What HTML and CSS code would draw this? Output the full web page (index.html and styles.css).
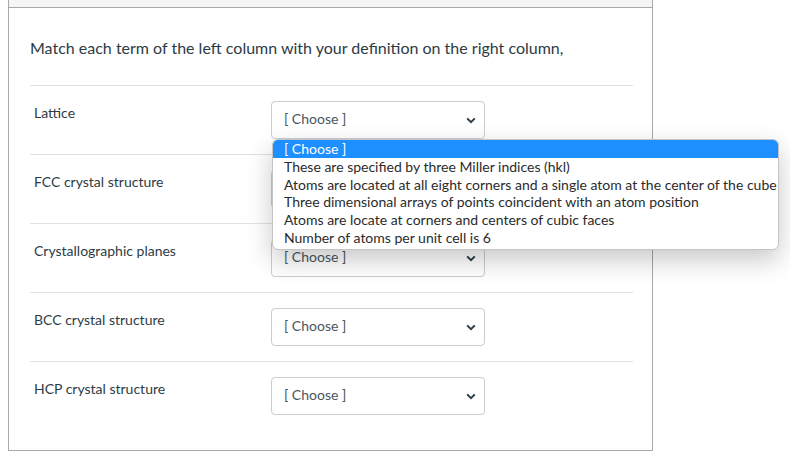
FILE: index.html
```html
<!DOCTYPE html>
<html>
<head>
<meta charset="utf-8">
<link rel="stylesheet" href="styles.css">
</head>
<body>
<div class="quiz">
  <div class="head"></div>
  <div class="content">
    <p class="prompt">Match each term of the left column with your definition on the right column,</p>
    <div class="row">
      <div class="label">Lattice</div>
      <div class="field">
        <div class="select"><span>[ Choose ]</span><svg class="chev" width="10" height="7" viewBox="0 0 10 7"><path d="M1.2 1.4 L5 5.2 L8.8 1.4" fill="none" stroke="#2d3b45" stroke-width="2"/></svg></div>
        <ul class="menu">
          <li class="sel">[ Choose ]</li>
          <li>These are specified by three Miller indices (hkl)</li>
          <li>Atoms are located at all eight corners and a single atom at the center of the cube</li>
          <li>Three dimensional arrays of points coincident with an atom position</li>
          <li>Atoms are locate at corners and centers of cubic faces</li>
          <li>Number of atoms per unit cell is 6</li>
        </ul>
      </div>
    </div>
    <div class="row">
      <div class="label">FCC crystal structure</div>
      <div class="field">
        <div class="select"><span>[ Choose ]</span><svg class="chev" width="10" height="7" viewBox="0 0 10 7"><path d="M1.2 1.4 L5 5.2 L8.8 1.4" fill="none" stroke="#2d3b45" stroke-width="2"/></svg></div>
      </div>
    </div>
    <div class="row">
      <div class="label">Crystallographic planes</div>
      <div class="field">
        <div class="select"><span>[ Choose ]</span><svg class="chev" width="10" height="7" viewBox="0 0 10 7"><path d="M1.2 1.4 L5 5.2 L8.8 1.4" fill="none" stroke="#2d3b45" stroke-width="2"/></svg></div>
      </div>
    </div>
    <div class="row">
      <div class="label">BCC crystal structure</div>
      <div class="field">
        <div class="select"><span>[ Choose ]</span><svg class="chev" width="10" height="7" viewBox="0 0 10 7"><path d="M1.2 1.4 L5 5.2 L8.8 1.4" fill="none" stroke="#2d3b45" stroke-width="2"/></svg></div>
      </div>
    </div>
    <div class="row">
      <div class="label">HCP crystal structure</div>
      <div class="field">
        <div class="select"><span>[ Choose ]</span><svg class="chev" width="10" height="7" viewBox="0 0 10 7"><path d="M1.2 1.4 L5 5.2 L8.8 1.4" fill="none" stroke="#2d3b45" stroke-width="2"/></svg></div>
      </div>
    </div>
  </div>
</div>
</body>
</html>
```
FILE: styles.css
```css
html, body {
  margin: 0;
  padding: 0;
  background: #ffffff;
}
body {
  font-family: Lato, "Open Sans", sans-serif;
  color: #2d3b45;
}
.quiz {
  margin-left: 8px;
  width: 645px;
  box-sizing: border-box;
  border: 1px solid #a8a8a8;
  border-top: none;
}
.head {
  height: 7px;
  background: #f5f5f5;
  border-bottom: 1px solid #a8a8a8;
}
.content {
  padding: 28px 19px 20px 21px;
}
.prompt {
  margin: 0 0 25px 0;
  font-size: 16px;
  line-height: 24px;
}
.row {
  display: flex;
  align-items: flex-start;
  border-top: 1px solid #dfe1e3;
  padding: 15px 0;
}
.label {
  width: 237px;
  padding: 2px 0 0 4px;
  font-size: 14px;
  line-height: 20px;
}
.field {
  position: relative;
}
.select {
  width: 214px;
  height: 38px;
  box-sizing: border-box;
  border: 1px solid #c7cdd1;
  border-radius: 4px;
  background: #ffffff;
  display: flex;
  align-items: center;
  justify-content: space-between;
  padding: 0 8px 3px 12px;
  font-size: 14px;
  line-height: 18px;
  color: #4a555d;
}
.chev {
  display: block;
  margin-top: 3px;
}
.menu {
  position: absolute;
  top: 38px;
  left: 1px;
  width: 507px;
  margin: 0;
  padding: 0 0 2px 0;
  list-style: none;
  background: #ffffff;
  border: 1px solid #c4c4c4;
  border-radius: 6px;
  overflow: hidden;
  box-shadow: 0 10px 26px rgba(0, 0, 0, 0.22);
  z-index: 5;
  box-sizing: border-box;
}
.menu li {
  height: 17.8px;
  line-height: 17.8px;
  padding-left: 11px;
  font-size: 14px;
  color: #2b2b2b;
  white-space: nowrap;
}
.menu li.sel {
  background: #1e8fff;
  color: #ffffff;
}
```
